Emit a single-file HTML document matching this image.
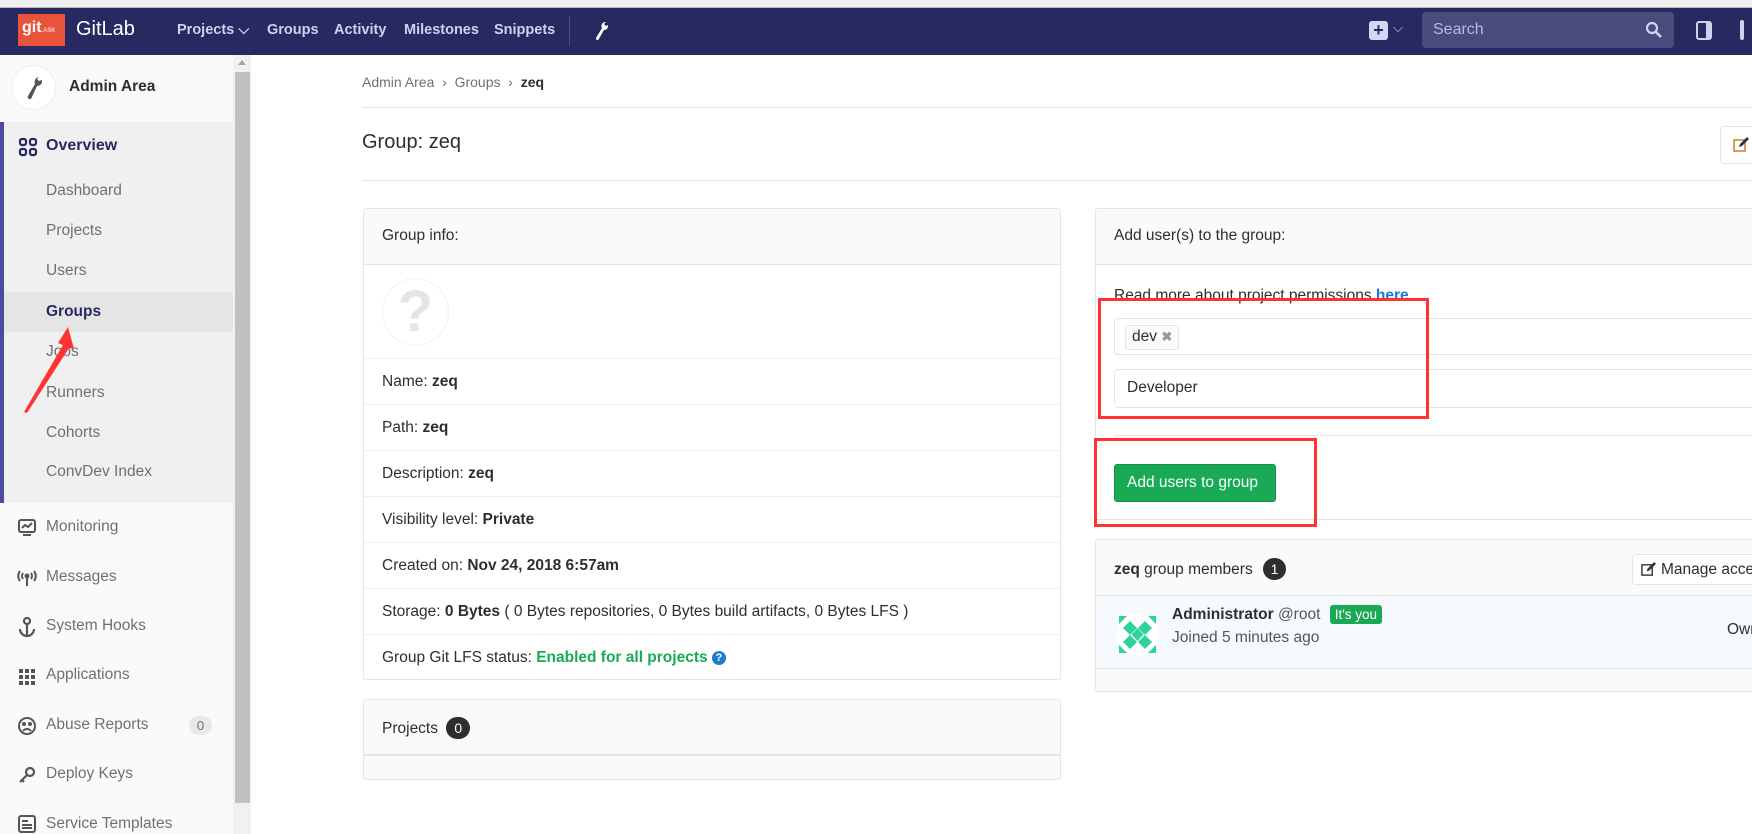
<!DOCTYPE html>
<html><head><meta charset="utf-8">
<style>
*{box-sizing:border-box;margin:0;padding:0}
body{width:1752px;height:834px;overflow:hidden;position:relative;background:#fff;font-family:"Liberation Sans",sans-serif;font-size:15.5px;color:#2e2e2e}
.a{position:absolute}
.nav{left:0;top:8px;width:1752px;height:47px;background:#292961}
.nav .it{position:absolute;top:14px;color:#d0d0ef;font-weight:bold;font-size:14.5px}
.side{left:0;top:55px;width:233px;height:779px;background:#fafafa}
.sitem{position:absolute;left:46px;color:#707070;font-size:15.5px}
.card{position:absolute;border:1px solid #e5e5e5;border-radius:3px;background:#fff}
.hdr{background:#fafafa;border-bottom:1px solid #e5e5e5}
.row{position:absolute;left:0;right:0;border-top:1px solid #efefef;padding-left:18px;line-height:46px;height:46px}
b{color:#2e2e2e}
.red{position:absolute;border:3px solid #f33}
.si{position:absolute;left:17px}
</style></head><body>
<div class="a" style="left:0;top:0;width:1752px;height:8px;background:#f0f0f0;border-bottom:1px solid #bbb"></div>
<div class="a nav">
  <div class="a" style="left:18px;top:6px;width:47px;height:32px;background:#e8533a;color:#fff;font-weight:bold;font-size:16px;padding:5px 0 0 4px">git<span style="font-size:6px;font-weight:normal">.ASK</span></div>
  <div class="a" style="left:76px;top:10px;color:#fff;font-size:20px">GitLab</div>
  <div class="it" style="left:177px">Projects ⌵</div>
  <div class="it" style="left:267px">Groups</div>
  <div class="it" style="left:334px">Activity</div>
  <div class="it" style="left:404px">Milestones</div>
  <div class="it" style="left:494px">Snippets</div>
  <div class="a" style="left:569px;top:8px;width:1px;height:30px;background:#4b4b85"></div>
  <svg class="a" style="left:592px;top:12px" width="18" height="22" viewBox="0 0 18 22"><path d="M13 2a4 4 0 0 0-3 6L4 18a1.5 1.5 0 0 0 2.5 1.5L12 10a4 4 0 0 0 4-5l-2 1-2-2 2-2z" fill="#fff"/></svg>
  <div class="a" style="left:1369px;top:13px;width:19px;height:19px;background:#d5d5f5;border-radius:3px;color:#292961;font-weight:bold;text-align:center;line-height:19px;font-size:18px">+</div>
  <div class="a" style="left:1393px;top:12px;color:#d0d0ef;font-size:13px">⌵</div>
  <div class="a" style="left:1422px;top:4px;width:252px;height:36px;background:#4a4a7d;border-radius:4px;color:#b8b8e0;padding:9px 0 0 11px;font-size:16px">Search
    <svg class="a" style="left:223px;top:9px" width="17" height="17" viewBox="0 0 17 17"><circle cx="7" cy="7" r="5" stroke="#d0d0ef" stroke-width="2.2" fill="none"/><path d="M11 11l5 5" stroke="#d0d0ef" stroke-width="2.6"/></svg></div>
  <div class="a" style="left:1696px;top:13px;width:16px;height:19px;border:2.5px solid #d0d0ef;border-radius:3px;border-right-width:6px"></div>
  <div class="a" style="left:1740px;top:12px;width:4px;height:20px;border:2px solid #d0d0ef;border-radius:2px"></div>
</div>

<div class="a side">
  <div class="a" style="left:11px;top:10px;width:45px;height:45px;border-radius:50%;background:#fff;border:1px solid #eee"></div>
  <svg class="a" style="left:23px;top:20px" width="22" height="26" viewBox="0 0 22 26"><path d="M16 2a5 5 0 0 0-4 7L5 21a2 2 0 0 0 3.5 2L14 11a5 5 0 0 0 5-6l-3 1-2-2 2-2z" fill="#555"/></svg>
  <div class="a" style="left:69px;top:23px;font-weight:bold;font-size:15.5px;color:#2e2e2e">Admin Area</div>
  <div class="a" style="left:0;top:67px;width:233px;height:381px;background:#f0f0f0;border-left:4px solid #4b4ba3"></div>
  <div class="a" style="left:4px;top:237px;width:229px;height:40px;background:#e5e5e5"></div>
  <svg class="a" style="left:18px;top:82px" width="20" height="20" viewBox="0 0 20 20" fill="none" stroke="#292961" stroke-width="2.2"><rect x="2" y="2" width="6" height="6" rx="2"/><rect x="12" y="2" width="6" height="6" rx="2"/><rect x="2" y="12" width="6" height="6" rx="2"/><rect x="12" y="12" width="6" height="6" rx="2"/></svg>
  <div class="a" style="left:46px;top:82px;color:#292961;font-weight:bold;font-size:16px">Overview</div>
  <div class="sitem" style="top:127px">Dashboard</div>
  <div class="sitem" style="top:167px">Projects</div>
  <div class="sitem" style="top:207px">Users</div>
  <div class="sitem" style="top:248px;color:#292961;font-weight:bold">Groups</div>
  <div class="sitem" style="top:288px">Jobs</div>
  <div class="sitem" style="top:329px">Runners</div>
  <div class="sitem" style="top:369px">Cohorts</div>
  <div class="sitem" style="top:408px">ConvDev Index</div>
  <div class="sitem" style="top:463px">Monitoring</div>
  <div class="sitem" style="top:513px">Messages</div>
  <div class="sitem" style="top:562px">System Hooks</div>
  <div class="sitem" style="top:611px">Applications</div>
  <div class="sitem" style="top:661px">Abuse Reports</div>
  <div class="a" style="left:189px;top:661px;width:23px;height:19px;border-radius:10px;background:#e8e8e8;color:#707070;font-size:13px;text-align:center;line-height:19px">0</div>
  <div class="sitem" style="top:710px">Deploy Keys</div>
  <div class="sitem" style="top:760px">Service Templates</div>
  <svg class="si" style="top:463px" width="20" height="20" viewBox="0 0 20 20" fill="none" stroke="#555" stroke-width="2"><rect x="2" y="2" width="16" height="12" rx="2"/><path d="M5 10l3-3 3 2 4-4M6 17h8"/></svg>
  <svg class="si" style="top:513px" width="20" height="20" viewBox="0 0 20 20" fill="none" stroke="#555" stroke-width="2"><circle cx="10" cy="8" r="1.5" fill="#555"/><path d="M10 10v8M6 5a5 5 0 0 0 0 6M14 5a5 5 0 0 1 0 6M3 3a8 8 0 0 0 0 10M17 3a8 8 0 0 1 0 10"/></svg>
  <svg class="si" style="top:561px" width="20" height="22" viewBox="0 0 20 22" fill="none" stroke="#555" stroke-width="2.2"><circle cx="10" cy="5" r="3"/><path d="M10 8v12M3 13a7 7 0 0 0 14 0"/></svg>
  <svg class="si" style="top:612px" width="20" height="20" viewBox="0 0 20 20" fill="#555"><rect x="2" y="2" width="4" height="4"/><rect x="8" y="2" width="4" height="4"/><rect x="14" y="2" width="4" height="4"/><rect x="2" y="8" width="4" height="4"/><rect x="8" y="8" width="4" height="4"/><rect x="14" y="8" width="4" height="4"/><rect x="2" y="14" width="4" height="4"/><rect x="8" y="14" width="4" height="4"/><rect x="14" y="14" width="4" height="4"/></svg>
  <svg class="si" style="top:661px" width="20" height="20" viewBox="0 0 20 20" fill="none" stroke="#555" stroke-width="2"><circle cx="10" cy="10" r="8"/><path d="M6 15a5 5 0 0 1 8 0"/><circle cx="7" cy="8" r="1" fill="#555"/><circle cx="13" cy="8" r="1" fill="#555"/></svg>
  <svg class="si" style="top:710px" width="20" height="20" viewBox="0 0 20 20" fill="none" stroke="#555" stroke-width="2.2"><circle cx="13" cy="7" r="4"/><path d="M10 10l-7 7M5 15l2 2"/></svg>
  <svg class="si" style="top:759px" width="20" height="20" viewBox="0 0 20 20" fill="none" stroke="#555" stroke-width="2"><rect x="2" y="2" width="16" height="16" rx="2"/><path d="M5 7h6M5 11h10M5 14h10"/></svg>
  <svg class="a" style="left:0;top:0" width="233" height="779"><path d="M68 272 L74 294 L69 293 L27 358 L24 357 L63 290 L58 288 Z" fill="#f33"/></svg>
</div>
<div class="a" style="left:233px;top:55px;width:18px;height:779px;background:#f1f1f1"></div>
<div class="a" style="left:235px;top:72px;width:15px;height:731px;background:#c1c1c1"></div>
<div class="a" style="left:238px;top:60px;width:0;height:0;border:4px solid transparent;border-bottom:5px solid #a3a3a3;border-top:0"></div>

<div class="a" style="left:362px;top:74px;font-size:14px;color:#707070">Admin Area &nbsp;›&nbsp; Groups &nbsp;›&nbsp; <b style="color:#2e2e2e">zeq</b></div>
<div class="a" style="left:362px;top:107px;width:1390px;height:1px;background:#e5e5e5"></div>
<div class="a" style="left:362px;top:131px;font-size:20px;color:#2e2e2e">Group: zeq</div>
<div class="a" style="left:362px;top:180px;width:1390px;height:1px;background:#e5e5e5"></div>
<div class="a" style="left:1720px;top:126px;width:40px;height:38px;border:1px solid #e5e5e5;border-radius:4px"></div>
<svg class="a" style="left:1733px;top:137px" width="16" height="16" viewBox="0 0 16 16"><rect x="1" y="3" width="11" height="11" fill="none" stroke="#c08030" stroke-width="1.5"/><path d="M6 10l1-3 7-7 2 2-7 7z" fill="#333"/></svg>

<div class="card" style="left:363px;top:208px;width:698px;height:472px">
  <div class="hdr" style="height:56px;padding:18px 0 0 18px">Group info:</div>
  <div class="a" style="left:18px;top:69px;width:67px;height:68px;border:1px solid #f0f0f0;border-radius:50%;text-align:center;font-size:58px;font-weight:bold;color:#e5e5e5;line-height:66px">?</div>
  <div class="row" style="top:149px">Name: <b>zeq</b></div>
  <div class="row" style="top:195px">Path: <b>zeq</b></div>
  <div class="row" style="top:241px">Description: <b>zeq</b></div>
  <div class="row" style="top:287px">Visibility level: <b>Private</b></div>
  <div class="row" style="top:333px">Created on: <b>Nov 24, 2018 6:57am</b></div>
  <div class="row" style="top:379px">Storage: <b>0 Bytes</b> ( 0 Bytes repositories, 0 Bytes build artifacts, 0 Bytes LFS )</div>
  <div class="row" style="top:425px">Group Git LFS status: <b style="color:#1aaa55">Enabled for all projects</b> <span style="display:inline-block;width:14px;height:14px;border-radius:50%;background:#1f78d1;color:#fff;font-size:11px;font-weight:bold;text-align:center;line-height:14px;vertical-align:1px">?</span></div>
</div>

<div class="card" style="left:363px;top:699px;width:698px;height:81px;background:#fafafa">
  <div class="hdr" style="height:56px;padding:17px 0 0 18px;border-bottom:2px solid #e5e5e5">Projects <span style="display:inline-block;width:24px;height:22px;border-radius:11px;background:#2e2e2e;color:#fff;font-size:14px;text-align:center;line-height:22px;margin-left:4px">0</span></div>
</div>

<div class="card" style="left:1095px;top:208px;width:680px;height:312px">
  <div class="hdr" style="height:56px;padding:18px 0 0 18px">Add user(s) to the group:</div>
  <div class="a" style="left:18px;top:78px">Read more about project permissions <b style="color:#1f78d1">here</b></div>
  <div class="a" style="left:18px;top:109px;width:680px;height:37px;border:1px solid #e5e5e5;border-radius:4px">
    <div class="a" style="left:10px;top:6px;height:25px;width:54px;background:#fafafa;border:1px solid #e5e5e5;border-radius:3px;padding:2px 0 0 6px">dev <span style="color:#999;font-size:13px;font-weight:bold">✖</span></div>
  </div>
  <div class="a" style="left:18px;top:160px;width:680px;height:39px;border:1px solid #e5e5e5;border-radius:4px;padding:9px 0 0 12px">Developer</div>
  <div class="a" style="left:18px;top:226px;width:680px;height:1px;background:#e5e5e5"></div>
  <div class="a" style="left:18px;top:255px;width:162px;height:38px;background:#1aaa55;border:1px solid #168f48;border-radius:3px;color:#fff;padding:9px 0 0 12px">Add users to group</div>
</div>
<div class="red" style="left:1098px;top:298px;width:331px;height:121px"></div>
<div class="red" style="left:1094px;top:438px;width:223px;height:89px"></div>

<div class="card" style="left:1095px;top:539px;width:680px;height:153px;background:#fafafa">
  <div class="hdr" style="height:56px;padding:18px 0 0 18px"><b>zeq</b> group members <span style="display:inline-block;width:23px;height:22px;border-radius:11px;background:#2e2e2e;color:#fff;font-size:14px;text-align:center;line-height:22px;margin-left:6px">1</span></div>
  <div class="a" style="left:536px;top:14px;width:160px;height:31px;background:#fff;border:1px solid #e5e5e5;border-radius:4px;padding:6px 0 0 28px">Manage access</div>
  <svg class="a" style="left:545px;top:22px" width="15" height="15" viewBox="0 0 16 16"><rect x="1" y="3" width="11" height="11" fill="none" stroke="#333" stroke-width="1.5"/><path d="M6 10l1-3 7-7 2 2-7 7z" fill="#333"/></svg>
  <div class="a" style="left:0;top:56px;width:680px;height:73px;background:#f6f9fd;border-bottom:1px solid #e5e5e5">
    <svg class="a" style="left:20px;top:17px" width="43" height="43" viewBox="0 0 43 43"><circle cx="21.5" cy="21.5" r="21.5" fill="#fff"/><g fill="#2fd39a"><path d="M3 3h8l-8 8z"/><path d="M40 3h-8l8 8z"/><path d="M3 40h8l-8-8z"/><path d="M40 40h-8l8-8z"/><path d="M14 8l7 7-7 7-7-7z"/><path d="M29 8l7 7-7 7-7-7z"/><path d="M14 22l7 7-7 7-7-7z"/><path d="M29 22l7 7-7 7-7-7z"/><path d="M21.5 15l6 6.5-6 6.5-6-6.5z"/></g></svg>
    <div class="a" style="left:76px;top:9px"><b>Administrator</b> <span style="color:#555">@root</span> <span style="display:inline-block;background:#1aaa55;color:#fff;font-size:13.5px;padding:2px 5px;border-radius:3px;margin-left:5px">It's you</span></div>
    <div class="a" style="left:76px;top:33px;color:#555">Joined 5 minutes ago</div>
    <div class="a" style="left:631px;top:25px;color:#2e2e2e">Owner</div>
  </div>
</div>
</body></html>
